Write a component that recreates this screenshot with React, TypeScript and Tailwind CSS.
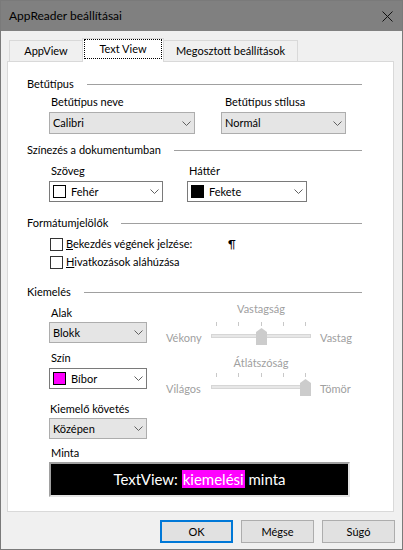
import React from 'react';

const Chevron: React.FC = () => (
  <svg width="9" height="5" viewBox="0 0 9 5" className="shrink-0">
    <path d="M0.5 0.5L4.5 4.5L8.5 0.5" fill="none" stroke="#606060" />
  </svg>
);

type ComboProps = { value: string; w: string; h?: string; white?: boolean; swatch?: string };

const Combo: React.FC<ComboProps> = ({ value, w, h = 'h-[21px]', white, swatch }) => (
  <div
    className={`${w} ${h} flex items-center pl-[3px] pr-[3px] border ${
      white ? 'bg-white border-[#7a7a7a]' : 'bg-[#e5e5e5] border-[#adadad]'
    }`}
  >
    {swatch && <div className={`w-[13px] h-[13px] border border-black mr-[5px] ${swatch}`} />}
    <span className="flex-1 leading-[16px]">{value}</span>
    <Chevron />
  </div>
);

const Heading: React.FC<{ label: string; className: string }> = ({ label, className }) => (
  <div className={`flex items-center w-[335px] h-[16px] ${className}`}>
    <span className="leading-[16px]">{label}</span>
    <div className="flex-1 h-px bg-[#a0a0a0] ml-[13px]" />
  </div>
);

const ticks = [6, 28, 51, 73, 95];

type SliderProps = { title: string; left: string; right: string; pos: number; titleMt: string; rowMt: string };

const Slider: React.FC<SliderProps> = ({ title, left, right, pos, titleMt, rowMt }) => {
  const cx = ticks[pos];
  return (
    <div className={`text-[#a0a0a0] ${titleMt}`}>
      <div className="pl-[44px] w-[146px] text-center h-[16px] leading-[16px]">{title}</div>
      <div className={`flex items-start ${rowMt}`}>
        <span className="w-[44px] mt-[10px] leading-[16px]">{left}</span>
        <svg width="102" height="26" viewBox="0 0 102 26">
          {ticks.map(t => (
            <line key={t} x1={t + 0.5} y1="2" x2={t + 0.5} y2="6" stroke="#c8c8c8" />
          ))}
          <rect x="1.5" y="14.5" width="99" height="3" fill="#e7e7e7" stroke="#d6d6d6" />
          <polygon
            points={`${cx - 5},12 ${cx + 0.5},8 ${cx + 6},12 ${cx + 6},25 ${cx - 5},25`}
            fill="#cccccc"
          />
        </svg>
        <span className="ml-[8px] mt-[10px] leading-[16px]">{right}</span>
      </div>
    </div>
  );
};

export default function App() {
  return (
    <div className="w-[403px] h-[550px] border border-[#7a7a7a] bg-[#f0f0f0] flex flex-col text-[11px] text-black font-['Lato',sans-serif]">
      {/* Title bar */}
      <div className="h-[30px] bg-[#808080] flex items-center pl-[8px] pr-[9px] shrink-0 text-[12px]">
        <span className="flex-1 leading-[16px]">AppReader beállításai</span>
        <svg width="11" height="11" viewBox="0 0 11 11">
          <path d="M0.5 0.5L10.5 10.5M10.5 0.5L0.5 10.5" stroke="#111" strokeWidth="1" />
        </svg>
      </div>

      <div className="px-[6px] flex flex-col">
        {/* Tabs */}
        <div className="mt-[7px] h-[23px] flex items-end pl-[2px]">
          <div className="w-[73px] h-[21px] border-t border-l border-[#d9d9d9] bg-[#f0f0f0] flex items-center justify-center leading-[16px]">
            AppView
          </div>
          <div className="relative z-10 w-[82px] h-[24px] -mb-px border-t border-l border-r border-[#d9d9d9] bg-white">
            <div className="absolute left-px right-px top-0 h-[20px] border border-dotted border-black flex items-center justify-center leading-[16px]">
              Text View
            </div>
          </div>
          <div className="w-[134px] h-[21px] border-t border-r border-[#d9d9d9] bg-[#f0f0f0] flex items-center justify-center leading-[16px]">
            Megosztott beállítások
          </div>
        </div>

        {/* Panel */}
        <div className="w-[387px] h-[451px] border border-[#d9d9d9] bg-white pl-[19px] flex flex-col">
          <Heading label="Betűtípus" className="mt-[14px]" />
          <div className="flex ml-[22px] mt-[2px]">
            <div className="w-[146px] flex flex-col">
              <span className="pl-[2px] h-[16px] leading-[16px]">Betűtípus neve</span>
              <div className="mt-[2px]">
                <Combo value="Calibri" w="w-[146px]" h="h-[22px]" />
              </div>
            </div>
            <div className="ml-[26px] w-[125px] flex flex-col">
              <span className="pl-[4px] h-[16px] leading-[16px]">Betűtípus stílusa</span>
              <div className="mt-[2px]">
                <Combo value="Normál" w="w-[125px]" h="h-[22px]" />
              </div>
            </div>
          </div>

          <Heading label="Színezés a dokumentumban" className="mt-[8px]" />
          <div className="flex ml-[22px] mt-[5px]">
            <div className="w-[114px] flex flex-col">
              <span className="pl-[2px] h-[16px] leading-[16px]">Szöveg</span>
              <div className="mt-[2px]">
                <Combo value="Fehér" w="w-[114px]" white swatch="bg-white" />
              </div>
            </div>
            <div className="ml-[24px] w-[120px] flex flex-col">
              <span className="pl-[2px] h-[16px] leading-[16px]">Háttér</span>
              <div className="mt-[2px]">
                <Combo value="Fekete" w="w-[120px]" white swatch="bg-black" />
              </div>
            </div>
          </div>

          <Heading label="Formátumjelölők" className="mt-[13px]" />
          <div className="flex items-center h-[16px] ml-[23px] mt-[5px]">
            <div className="w-[13px] h-[13px] border border-[#333333] bg-white" />
            <span className="ml-[3px] w-[162px] leading-[16px]">
              <span className="underline">B</span>ekezdés végének jelzése:
            </span>
            <span className="leading-[16px]">¶</span>
          </div>
          <div className="flex items-center h-[16px] ml-[23px] mt-[2px]">
            <div className="w-[13px] h-[13px] border border-[#333333] bg-white" />
            <span className="ml-[3px] leading-[16px]">
              <span className="underline">H</span>ivatkozások aláhúzása
            </span>
          </div>

          <Heading label="Kiemelés" className="mt-[14px]" />
          <div className="flex h-[97px] ml-[22px]">
            <div className="w-[98px] flex flex-col">
              <span className="pl-[2px] mt-[5px] h-[16px] leading-[16px]">Alak</span>
              <div className="mt-[1px]">
                <Combo value="Blokk" w="w-[98px]" />
              </div>
              <span className="pl-[2px] mt-[7px] h-[16px] leading-[16px]">Szín</span>
              <div className="mt-[2px]">
                <Combo value="Bíbor" w="w-[98px]" white swatch="bg-[#ff00ff]" />
              </div>
            </div>
            <div className="ml-[19px] flex flex-col">
              <Slider title="Vastagság" left="Vékony" right="Vastag" pos={2} titleMt="mt-[1px]" rowMt="mt-[3px]" />
              <Slider title="Átlátszóság" left="Világos" right="Tömör" pos={4} titleMt="mt-[9px]" rowMt="mt-0" />
            </div>
          </div>

          <span className="ml-[23px] mt-[4px] h-[16px] leading-[16px]">Kiemelő követés</span>
          <div className="ml-[22px] mt-[1px]">
            <Combo value="Középen" w="w-[98px]" />
          </div>
          <span className="ml-[24px] mt-[6px] h-[16px] leading-[16px]">Minta</span>
          <div className="ml-[22px] mt-[1px] w-[301px] h-[35px] bg-black border-2 border-t-[#a0a0a0] border-l-[#a0a0a0] border-r-[#e3e3e3] border-b-[#e3e3e3] flex items-center justify-center text-white text-[15px]">
            <span className="leading-[19px]">
              TextView: <span className="bg-[#ff00ff] px-px">kiemelési</span> minta
            </span>
          </div>
        </div>

        {/* Buttons */}
        <div className="mt-[8px] flex justify-end gap-[8px] pr-px">
          <button className="w-[73px] h-[23px] bg-[#e1e1e1] border border-[#0078d7] shadow-[inset_0_0_0_1px_#0078d7] leading-[16px]">
            OK
          </button>
          <button className="w-[73px] h-[23px] bg-[#e1e1e1] border border-[#adadad] leading-[16px]">Mégse</button>
          <button className="w-[73px] h-[23px] bg-[#e1e1e1] border border-[#adadad] leading-[16px]">Súgó</button>
        </div>
      </div>
    </div>
  );
}
